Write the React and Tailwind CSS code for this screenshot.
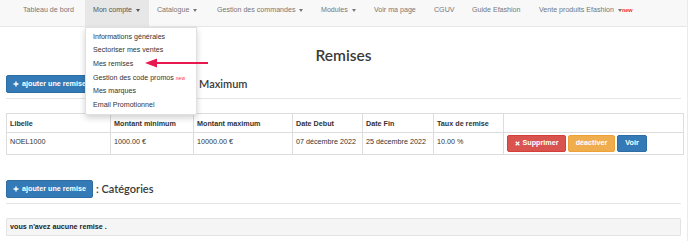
import React from "react";

const Caret = ({ color = "border-t-[#777]" }) => (
  <span
    className={`inline-block w-0 h-0 ml-[4px] border-l-[2.5px] border-r-[2.5px] border-t-[3px] border-l-transparent border-r-transparent ${color}`}
  />
);

const navItems = [
  { label: "Tableau de bord", w: "w-[70px]" },
  { label: "Mon compte", w: "w-[64px]", caret: true, active: true },
  { label: "Catalogue", w: "w-[60px]", caret: true },
  { label: "Gestion des commandes", w: "w-[104px]", caret: true },
  { label: "Modules", w: "w-[53px]", caret: true },
  { label: "Voir ma page", w: "w-[60px]" },
  { label: "CGUV", w: "w-[38px]" },
  { label: "Guide Efashion", w: "w-[67px]" },
  { label: "Vente produits Efashion", w: "w-[120px]", caret: true, isNew: true },
];

const dropdown = [
  "Informations générales",
  "Sectoriser mes ventes",
  "Mes remises",
  "Gestion des code promos",
  "Mes marques",
  "Email Promotionnel",
];

const AddButton = () => (
  <button className="h-[18px] w-[87px] rounded-[2px] bg-[#337ab7] border border-[#2e6da4] text-white text-[7.2px] font-bold flex items-center justify-center gap-[3px] shrink-0">
    <svg width="6" height="6" viewBox="0 0 6 6">
      <path d="M3 0.5V5.5M0.5 3H5.5" stroke="white" strokeWidth="1.4" />
    </svg>
    <span>ajouter une remise</span>
  </button>
);

const headFont = { fontFamily: 'Lato, "Noto Sans", sans-serif' };

export default function App() {
  return (
    <div
      className="relative w-[688px] h-[241px] overflow-hidden bg-white border-r border-[#f3ecd2] text-[#333]"
      style={{ fontFamily: '"Liberation Sans", Arial, sans-serif' }}
    >
      {/* Navbar */}
      <div className="h-[27px] bg-[#f8f8f8] border-b border-[#e7e7e7] flex pl-[15px]">
        {navItems.map((it) => (
          <div
            key={it.label}
            className={`${it.w} h-[26px] flex items-start pt-[6px] pl-[8px] text-[7.1px] leading-[9px] whitespace-nowrap ${
              it.active ? "bg-[#e7e7e7] text-[#555]" : "text-[#777]"
            }`}
          >
            <span className="flex items-center">
              {it.label}
              {it.caret && <Caret color={it.active ? "border-t-[#555]" : "border-t-[#777]"} />}
              {it.isNew && (
                <span className="text-[#ff2a2a] text-[5.5px] font-bold leading-none mt-[1px]">new</span>
              )}
            </span>
          </div>
        ))}
      </div>

      {/* Content */}
      <div className="px-[6px]">
        <div className="mt-[21px] h-[16px] text-center text-[15.5px] leading-none font-semibold text-[#3a3a3a]" style={headFont}>
          Remises
        </div>

        <div className="mt-[11px] flex items-center">
          <AddButton />
          <span className="ml-[3px] w-[103px] shrink-0 text-[11px] font-semibold text-[#3a3a3a] whitespace-nowrap" style={headFont}>
            : Remise Montant
          </span>
          <span className="text-[11px] font-semibold text-[#3a3a3a] whitespace-nowrap" style={headFont}>
            Maximum
          </span>
        </div>

        <div className="mt-[5px] h-[1px] bg-[#e5e5e5]" />

        <table className="mt-[14px] w-[678px] table-fixed border-collapse border border-[#ddd] text-[7.2px]">
          <colgroup>
            <col className="w-[104px]" />
            <col className="w-[83px]" />
            <col className="w-[99px]" />
            <col className="w-[70px]" />
            <col className="w-[71px]" />
            <col className="w-[70px]" />
            <col />
          </colgroup>
          <thead>
            <tr className="h-[19px]">
              {["Libelle", "Montant minimum", "Montant maximum", "Date Debut", "Date Fin", "Taux de remise", ""].map((h, i) => (
                <th key={i} className="border border-[#ddd] px-[3px] text-left font-bold align-middle whitespace-nowrap leading-[9px] text-[#333]">
                  {h}
                </th>
              ))}
            </tr>
          </thead>
          <tbody>
            <tr>
              {["NOEL1000", "1000.00 €", "10000.00 €", "07 décembre 2022", "25 décembre 2022", "10.00 %"].map((v, i) => (
                <td key={i} className="border border-[#ddd] px-[3px] pt-[4px] align-top leading-[9px] whitespace-nowrap text-[#333]">
                  {v}
                </td>
              ))}
              <td className="border border-[#ddd] pl-[3px] pt-[2px] pb-[2px] align-top">
                <div className="flex gap-[2px]">
                  <button className="h-[17px] w-[59px] rounded-[2px] bg-[#d9534f] border border-[#d43f3a] text-white font-bold flex items-center justify-center gap-[3px]">
                    <svg width="5" height="5" viewBox="0 0 5 5">
                      <path d="M0.7 0.7L4.3 4.3M4.3 0.7L0.7 4.3" stroke="white" strokeWidth="1.3" />
                    </svg>
                    <span>Supprimer</span>
                  </button>
                  <button className="h-[17px] w-[47px] rounded-[2px] bg-[#f0ad4e] border border-[#eea236] text-white font-bold">
                    déactiver
                  </button>
                  <button className="h-[17px] w-[30px] rounded-[2px] bg-[#337ab7] border border-[#2e6da4] text-white font-bold">
                    Voir
                  </button>
                </div>
              </td>
            </tr>
          </tbody>
        </table>

        <div className="mt-[25px] flex items-center">
          <AddButton />
          <span className="ml-[3px] text-[11px] font-semibold text-[#3a3a3a] whitespace-nowrap" style={headFont}>
            : Catégories
          </span>
        </div>

        <div className="mt-[5px] h-[1px] bg-[#e5e5e5]" />

        <div className="mt-[14px] h-[18px] bg-[#f5f5f5] border border-[#e3e3e3] rounded-[1px] flex items-center px-[3px] text-[7.2px] font-bold text-[#222]">
          vous n'avez aucune remise .
        </div>
      </div>

      {/* Dropdown menu */}
      <div className="absolute left-[85px] top-[27px] w-[112px] bg-white border border-[rgba(0,0,0,0.12)] rounded-b-[2px] shadow-[0_3px_6px_rgba(0,0,0,0.18)] py-[2px]">
        {dropdown.map((d) => (
          <div key={d} className="h-[13.7px] flex items-center pl-[7px] text-[7.1px] text-[#333] whitespace-nowrap">
            {d}
            {d === "Gestion des code promos" && (
              <span className="ml-[2px] text-[#ff3030] text-[5px] leading-none mt-[1px]">new</span>
            )}
          </div>
        ))}
      </div>

      {/* Red arrow */}
      <svg className="absolute left-[143px] top-[57px]" width="68" height="12" viewBox="0 0 68 12">
        <line x1="13" y1="6" x2="65" y2="6" stroke="#e8174f" strokeWidth="2" />
        <path d="M2 6L14 1.5L14 10.5Z" fill="#e8174f" />
      </svg>
    </div>
  );
}
